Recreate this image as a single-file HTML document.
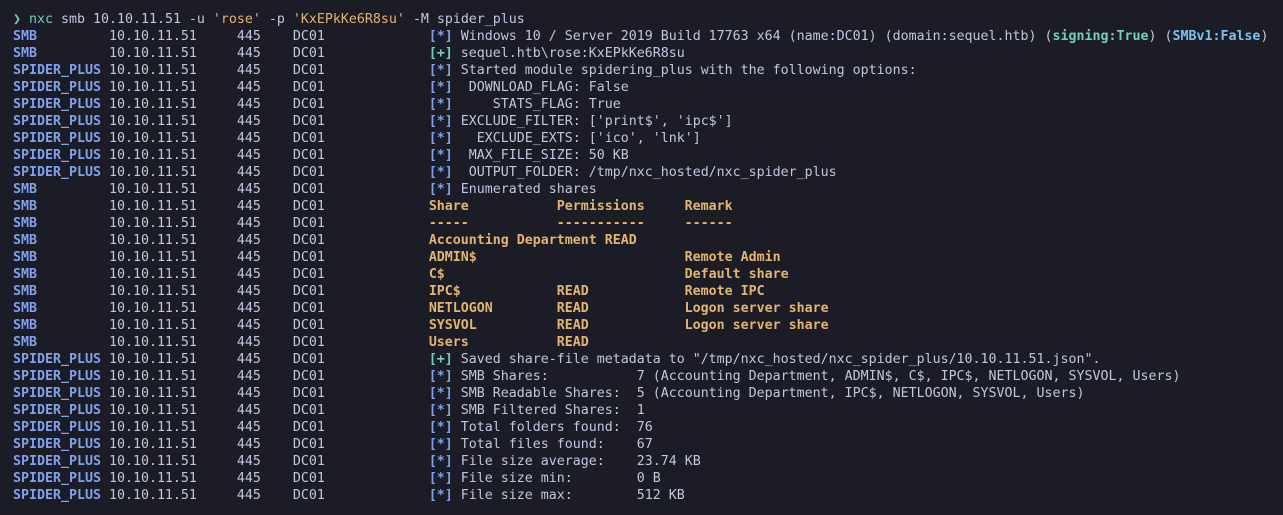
<!DOCTYPE html>
<html><head><meta charset="utf-8"><style>
html,body{margin:0;padding:0;background:#1c1c27;width:1283px;height:515px;overflow:hidden}
pre{margin:0;position:absolute;left:13px;top:11px;font-family:"DejaVu Sans Mono","Liberation Mono",monospace;font-size:13.29px;line-height:17px;color:#c3c7de;letter-spacing:0}
.b{color:#7fa2ec;font-weight:bold}
.g{color:#6fd3b9}
.gb{color:#6fd3b9;font-weight:bold}
.cy{color:#78c4ee;font-weight:bold}
.o{color:#e4b56f;font-weight:bold}
.y{color:#e4b56f}
.p{color:#7fa2ec}
</style></head><body><pre><span class="g">❯</span> <span class="g">nxc</span> smb 10.10.11.51 -u <span class="y">'rose'</span> -p <span class="y">'KxEPkKe6R8su'</span> -M spider_plus
<span class="b">SMB</span>         10.10.11.51     445    DC01             <span class="b">[*]</span> Windows 10 / Server 2019 Build 17763 x64 (name:DC01) (domain:sequel.htb) (<span class="gb">signing:True</span>) (<span class="cy">SMBv1:False</span>)
<span class="b">SMB</span>         10.10.11.51     445    DC01             <span class="gb">[+]</span> sequel.htb\rose:KxEPkKe6R8su
<span class="b">SPIDER_PLUS</span> 10.10.11.51     445    DC01             <span class="b">[*]</span> Started module spidering_plus with the following options:
<span class="b">SPIDER_PLUS</span> 10.10.11.51     445    DC01             <span class="b">[*]</span>  DOWNLOAD_FLAG: False
<span class="b">SPIDER_PLUS</span> 10.10.11.51     445    DC01             <span class="b">[*]</span>     STATS_FLAG: True
<span class="b">SPIDER_PLUS</span> 10.10.11.51     445    DC01             <span class="b">[*]</span> EXCLUDE_FILTER: ['print$', 'ipc$']
<span class="b">SPIDER_PLUS</span> 10.10.11.51     445    DC01             <span class="b">[*]</span>   EXCLUDE_EXTS: ['ico', 'lnk']
<span class="b">SPIDER_PLUS</span> 10.10.11.51     445    DC01             <span class="b">[*]</span>  MAX_FILE_SIZE: 50 KB
<span class="b">SPIDER_PLUS</span> 10.10.11.51     445    DC01             <span class="b">[*]</span>  OUTPUT_FOLDER: /tmp/nxc_hosted/nxc_spider_plus
<span class="b">SMB</span>         10.10.11.51     445    DC01             <span class="b">[*]</span> Enumerated shares
<span class="b">SMB</span>         10.10.11.51     445    DC01             <span class="o">Share           Permissions     Remark</span>
<span class="b">SMB</span>         10.10.11.51     445    DC01             <span class="o">-----           -----------     ------</span>
<span class="b">SMB</span>         10.10.11.51     445    DC01             <span class="o">Accounting Department READ</span>
<span class="b">SMB</span>         10.10.11.51     445    DC01             <span class="o">ADMIN$                          Remote Admin</span>
<span class="b">SMB</span>         10.10.11.51     445    DC01             <span class="o">C$                              Default share</span>
<span class="b">SMB</span>         10.10.11.51     445    DC01             <span class="o">IPC$            READ            Remote IPC</span>
<span class="b">SMB</span>         10.10.11.51     445    DC01             <span class="o">NETLOGON        READ            Logon server share</span>
<span class="b">SMB</span>         10.10.11.51     445    DC01             <span class="o">SYSVOL          READ            Logon server share</span>
<span class="b">SMB</span>         10.10.11.51     445    DC01             <span class="o">Users           READ</span>
<span class="b">SPIDER_PLUS</span> 10.10.11.51     445    DC01             <span class="gb">[+]</span> Saved share-file metadata to "/tmp/nxc_hosted/nxc_spider_plus/10.10.11.51.json".
<span class="b">SPIDER_PLUS</span> 10.10.11.51     445    DC01             <span class="b">[*]</span> SMB Shares:           7 (Accounting Department, ADMIN$, C$, IPC$, NETLOGON, SYSVOL, Users)
<span class="b">SPIDER_PLUS</span> 10.10.11.51     445    DC01             <span class="b">[*]</span> SMB Readable Shares:  5 (Accounting Department, IPC$, NETLOGON, SYSVOL, Users)
<span class="b">SPIDER_PLUS</span> 10.10.11.51     445    DC01             <span class="b">[*]</span> SMB Filtered Shares:  1
<span class="b">SPIDER_PLUS</span> 10.10.11.51     445    DC01             <span class="b">[*]</span> Total folders found:  76
<span class="b">SPIDER_PLUS</span> 10.10.11.51     445    DC01             <span class="b">[*]</span> Total files found:    67
<span class="b">SPIDER_PLUS</span> 10.10.11.51     445    DC01             <span class="b">[*]</span> File size average:    23.74 KB
<span class="b">SPIDER_PLUS</span> 10.10.11.51     445    DC01             <span class="b">[*]</span> File size min:        0 B
<span class="b">SPIDER_PLUS</span> 10.10.11.51     445    DC01             <span class="b">[*]</span> File size max:        512 KB
</pre></body></html>
